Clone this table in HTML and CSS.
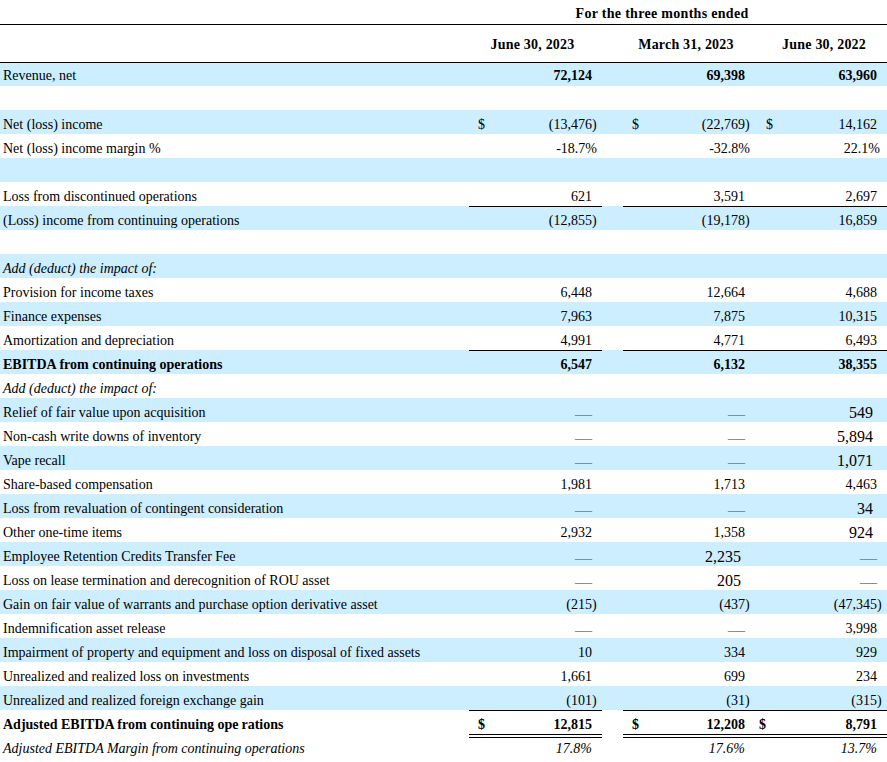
FILE: index.html
```html
<!DOCTYPE html>
<html>
<head>
<meta charset="utf-8">
<link rel="stylesheet" href="styles.css">
</head>
<body>
<table class="fin">
<colgroup>
<col class="w-l"><col class="w-d1"><col class="w-n1"><col class="w-p1"><col class="w-g"><col class="w-d2"><col class="w-n2"><col class="w-p2"><col class="w-d3"><col class="w-n3"><col class="w-p3">
</colgroup>
<thead>
<tr class="h1"><th></th><th colspan="10" class="period">For the three months ended</th></tr>
<tr class="h2"><th></th><th colspan="3" class="ch c1">June 30, 2023</th><th></th><th colspan="3" class="ch c2">March 31, 2023</th><th colspan="3" class="ch c3">June 30, 2022</th></tr>
</thead>
<tbody>
<tr class="r b first boldnum"><td class="l">Revenue, net</td><td></td><td class="n">72,124</td><td></td><td class="g"></td><td></td><td class="n">69,398</td><td></td><td></td><td class="n">63,960</td><td></td></tr>
<tr class="r"><td class="l"></td><td></td><td></td><td></td><td class="g"></td><td></td><td></td><td></td><td></td><td></td><td></td></tr>
<tr class="r b"><td class="l">Net (loss) income</td><td class="d">$</td><td class="n">(13,476</td><td class="p">)</td><td class="g"></td><td class="d">$</td><td class="n">(22,769</td><td class="p">)</td><td class="d d3">$</td><td class="n">14,162</td><td></td></tr>
<tr class="r"><td class="l">Net (loss) income margin %</td><td></td><td class="n"><span class="pct">-18.7%</span></td><td></td><td class="g"></td><td></td><td class="n"><span class="pct">-32.8%</span></td><td></td><td></td><td class="n"><span class="pct3">22.1%</span></td><td></td></tr>
<tr class="r b"><td class="l"></td><td></td><td></td><td></td><td class="g"></td><td></td><td></td><td></td><td></td><td></td><td></td></tr>
<tr class="r"><td class="l">Loss from discontinued operations</td><td></td><td class="n">621</td><td></td><td class="g"></td><td></td><td class="n">3,591</td><td></td><td></td><td class="n">2,697</td><td></td></tr>
<tr class="r b ul"><td class="l">(Loss) income from continuing operations</td><td></td><td class="n">(12,855</td><td class="p">)</td><td class="g"></td><td></td><td class="n">(19,178</td><td class="p">)</td><td></td><td class="n">16,859</td><td></td></tr>
<tr class="r"><td class="l"></td><td></td><td></td><td></td><td class="g"></td><td></td><td></td><td></td><td></td><td></td><td></td></tr>
<tr class="r b"><td class="l it">Add (deduct) the impact of:</td><td></td><td></td><td></td><td class="g"></td><td></td><td></td><td></td><td></td><td></td><td></td></tr>
<tr class="r"><td class="l">Provision for income taxes</td><td></td><td class="n">6,448</td><td></td><td class="g"></td><td></td><td class="n">12,664</td><td></td><td></td><td class="n">4,688</td><td></td></tr>
<tr class="r b"><td class="l">Finance expenses</td><td></td><td class="n">7,963</td><td></td><td class="g"></td><td></td><td class="n">7,875</td><td></td><td></td><td class="n">10,315</td><td></td></tr>
<tr class="r"><td class="l">Amortization and depreciation</td><td></td><td class="n">4,991</td><td></td><td class="g"></td><td></td><td class="n">4,771</td><td></td><td></td><td class="n">6,493</td><td></td></tr>
<tr class="r b ul bold"><td class="l">EBITDA from continuing operations</td><td></td><td class="n">6,547</td><td></td><td class="g"></td><td></td><td class="n">6,132</td><td></td><td></td><td class="n">38,355</td><td></td></tr>
<tr class="r"><td class="l it">Add (deduct) the impact of:</td><td></td><td></td><td></td><td class="g"></td><td></td><td></td><td></td><td></td><td></td><td></td></tr>
<tr class="r b"><td class="l">Relief of fair value upon acquisition</td><td></td><td class="n dash">—</td><td></td><td class="g"></td><td></td><td class="n dash">—</td><td></td><td></td><td class="n big">549</td><td></td></tr>
<tr class="r"><td class="l">Non-cash write downs of inventory</td><td></td><td class="n dash">—</td><td></td><td class="g"></td><td></td><td class="n dash">—</td><td></td><td></td><td class="n big">5,894</td><td></td></tr>
<tr class="r b"><td class="l">Vape recall</td><td></td><td class="n dash">—</td><td></td><td class="g"></td><td></td><td class="n dash">—</td><td></td><td></td><td class="n big">1,071</td><td></td></tr>
<tr class="r"><td class="l">Share-based compensation</td><td></td><td class="n">1,981</td><td></td><td class="g"></td><td></td><td class="n">1,713</td><td></td><td></td><td class="n">4,463</td><td></td></tr>
<tr class="r b"><td class="l">Loss from revaluation of contingent consideration</td><td></td><td class="n dash">—</td><td></td><td class="g"></td><td></td><td class="n dash">—</td><td></td><td></td><td class="n big">34</td><td></td></tr>
<tr class="r"><td class="l">Other one-time items</td><td></td><td class="n">2,932</td><td></td><td class="g"></td><td></td><td class="n">1,358</td><td></td><td></td><td class="n big">924</td><td></td></tr>
<tr class="r b"><td class="l">Employee Retention Credits Transfer Fee</td><td></td><td class="n dash">—</td><td></td><td class="g"></td><td></td><td class="n big">2,235</td><td></td><td></td><td class="n dash">—</td><td></td></tr>
<tr class="r"><td class="l">Loss on lease termination and derecognition of ROU asset</td><td></td><td class="n dash">—</td><td></td><td class="g"></td><td></td><td class="n big">205</td><td></td><td></td><td class="n dash">—</td><td></td></tr>
<tr class="r b"><td class="l">Gain on fair value of warrants and purchase option derivative asset</td><td></td><td class="n">(215</td><td class="p">)</td><td class="g"></td><td></td><td class="n">(437</td><td class="p">)</td><td></td><td class="n">(47,345</td><td class="p">)</td></tr>
<tr class="r"><td class="l">Indemnification asset release</td><td></td><td class="n dash">—</td><td></td><td class="g"></td><td></td><td class="n dash">—</td><td></td><td></td><td class="n">3,998</td><td></td></tr>
<tr class="r b"><td class="l">Impairment of property and equipment and loss on disposal of fixed assets</td><td></td><td class="n">10</td><td></td><td class="g"></td><td></td><td class="n">334</td><td></td><td></td><td class="n">929</td><td></td></tr>
<tr class="r"><td class="l">Unrealized and realized loss on investments</td><td></td><td class="n">1,661</td><td></td><td class="g"></td><td></td><td class="n">699</td><td></td><td></td><td class="n">234</td><td></td></tr>
<tr class="r b"><td class="l">Unrealized and realized foreign exchange gain</td><td></td><td class="n">(101</td><td class="p">)</td><td class="g"></td><td></td><td class="n">(31</td><td class="p">)</td><td></td><td class="n">(315</td><td class="p">)</td></tr>
<tr class="r ul bold"><td class="l">Adjusted EBITDA from continuing ope<span class="kern">rations</span></td><td class="d">$</td><td class="n">12,815</td><td></td><td class="g"></td><td class="d">$</td><td class="n">12,208</td><td></td><td class="d d3b">$</td><td class="n">8,791</td><td></td></tr>
<tr class="r dbl"><td class="l it">Adjusted EBITDA Margin from continuing operations</td><td></td><td class="n it">17.8%</td><td></td><td class="g"></td><td></td><td class="n it">17.6%</td><td></td><td></td><td class="n it">13.7%</td><td></td></tr>
</tbody>
</table>
</body>
</html>
```

FILE: styles.css
```css
html, body {
  margin: 0;
  padding: 0;
  background: #fff;
}

body {
  font-family: "Liberation Serif", "Times New Roman", serif;
  font-size: 14px;
  color: #000;
}

.fin {
  table-layout: fixed;
  border-collapse: separate;
  border-spacing: 0;
  width: 887px;
}

.w-l { width: 469px; }
.w-d1 { width: 26px; }
.w-n1 { width: 97px; }
.w-p1 { width: 10px; }
.w-g { width: 21px; }
.w-d2 { width: 27px; }
.w-n2 { width: 95px; }
.w-p2 { width: 12px; }
.w-d3 { width: 21px; }
.w-n3 { width: 99px; }
.w-p3 { width: 10px; }

th, td {
  padding: 0;
  white-space: nowrap;
  overflow: visible;
  vertical-align: middle;
}

th {
  font-weight: bold;
}

.h1 th {
  height: 21px;
  padding-top: 3px;
  border-bottom: 1px solid #000;
}

.period {
  text-align: center;
  padding-right: 32px;
  letter-spacing: 0.3px;
}

.h2 th {
  height: 35px;
  padding-top: 2px;
  border-bottom: 1px solid #000;
  letter-spacing: 0.2px;
}

.ch { text-align: center; }
.ch.c1 { padding-right: 6px; }
.ch.c2 { padding-right: 8px; }
.ch.c3 { padding-left: 4px; }

.r { height: 24px; }
.r.first { height: 23px; }
.r td { padding-top: 6px; }
.r.first td { padding-top: 3px; }
.r.b td { background: #cceeff; }

.l {
  padding-left: 3px;
  text-align: left;
}

.it { font-style: italic; }
.bold td { font-weight: bold; }
.boldnum td.n { font-weight: bold; }

.n { text-align: right; }
.p { text-align: left; }
.d { text-align: left; padding-left: 9px; }
.d.d3 { padding-left: 9px; }
.d.d3b { padding-left: 2px; }

.pct { margin-right: -5px; }
.pct3 { margin-right: -3px; }

.dash {
  color: #8c8c8c;
  font-size: 17px;
  line-height: 1;
}

.big {
  font-size: 16px;
  padding-right: 4px;
  line-height: 1;
}

.kern { margin-left: 3px; }

.ul td:not(.l):not(.g) {
  box-shadow: inset 0 1px 0 #000;
}

.dbl td:not(.l):not(.g) {
  box-shadow: inset 0 1px 0 #000, inset 0 3px 0 #fff, inset 0 4px 0 #000;
}
```
